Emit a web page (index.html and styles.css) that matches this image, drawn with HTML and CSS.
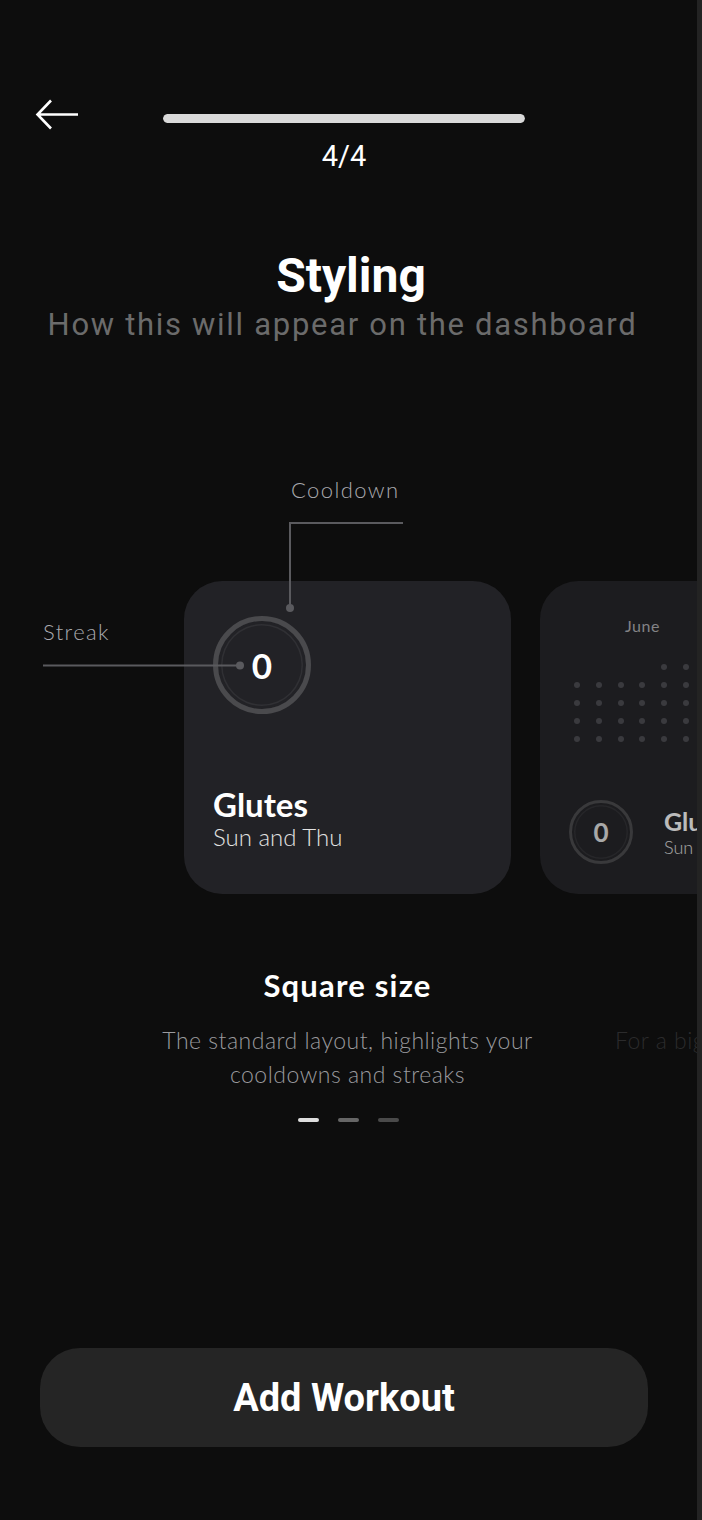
FILE: index.html
```html
<!DOCTYPE html>
<html lang="en">
<head>
    <meta charset="UTF-8">
    <meta name="viewport" content="width=device-width, initial-scale=1.0">
    <title>Add Workout - Styling</title>
    <link rel="stylesheet" href="styles.css">
</head>
<body>
    <div class="screen">
        <header class="topbar">
            <button class="back" aria-label="Back">
                <svg viewBox="0 0 44 32" width="44" height="32">
                    <path d="M16 1.5 L2.5 15.5 L16 29.5 M2.5 15.5 H43" fill="none" stroke="#fff" stroke-width="2.6"/>
                </svg>
            </button>
            <div class="progress">
                <div class="progress-bar"><div class="progress-fill" style="width: 100%"></div></div>
                <div class="progress-label">4/4</div>
            </div>
        </header>

        <div class="heading">
            <h1 class="heading-title">Styling</h1>
            <p class="heading-sub">How this will appear on the dashboard</p>
        </div>

        <div class="carousel">
            <div class="track">
                <!-- square layout -->
                <div class="slide">
                    <div class="card">
                        <svg class="callouts" viewBox="0 0 362 150" width="362" height="150">
                            <path d="M360 3 H247 V88" fill="none" stroke="#5a5a5e" stroke-width="2"/>
                            <circle cx="247" cy="88" r="4" fill="#5a5a5e"/>
                            <path d="M0 145.5 H197" fill="none" stroke="#5a5a5e" stroke-width="2"/>
                            <circle cx="197" cy="145.5" r="4" fill="#5a5a5e"/>
                        </svg>
                        <span class="callout-label callout-cooldown">Cooldown</span>
                        <span class="callout-label callout-streak">Streak</span>

                        <div class="ring">0</div>
                        <div class="card-name">Glutes</div>
                        <div class="card-days">Sun and Thu</div>
                    </div>
                    <h2 class="slide-title">Square size</h2>
                    <p class="slide-desc">The standard layout, highlights your cooldowns and streaks</p>
                </div>

                <!-- wide layout -->
                <div class="slide is-next">
                    <div class="card card-wide">
                        <div class="cal">
                            <div class="cal-month">June</div>
                            <div class="cal-grid">
                                <span class="cal-dot blank"></span><span class="cal-dot blank"></span><span class="cal-dot blank"></span><span class="cal-dot blank"></span><span class="cal-dot"></span><span class="cal-dot"></span><span class="cal-dot"></span>
                                <span class="cal-dot"></span><span class="cal-dot"></span><span class="cal-dot"></span><span class="cal-dot"></span><span class="cal-dot"></span><span class="cal-dot"></span><span class="cal-dot"></span>
                                <span class="cal-dot"></span><span class="cal-dot"></span><span class="cal-dot"></span><span class="cal-dot"></span><span class="cal-dot"></span><span class="cal-dot"></span><span class="cal-dot"></span>
                                <span class="cal-dot"></span><span class="cal-dot"></span><span class="cal-dot"></span><span class="cal-dot"></span><span class="cal-dot"></span><span class="cal-dot"></span><span class="cal-dot"></span>
                                <span class="cal-dot"></span><span class="cal-dot"></span><span class="cal-dot"></span><span class="cal-dot"></span><span class="cal-dot"></span><span class="cal-dot"></span>
                            </div>
                        </div>
                        <div class="card-row">
                            <div class="ring ring-small">0</div>
                            <div>
                                <div class="card-name card-name-small">Glutes</div>
                                <div class="card-days card-days-small">Sun and Thu</div>
                            </div>
                        </div>
                    </div>
                    <h2 class="slide-title">Wide size</h2>
                    <p class="slide-desc">For a bigger view</p>
                </div>
            </div>
        </div>

        <div class="pager">
            <span class="on"></span>
            <span class="mid"></span>
            <span></span>
        </div>

        <button class="cta">Add Workout</button>
    </div>
</body>
</html>
```

FILE: styles.css
```css
* {
    box-sizing: border-box;
}

body {
    margin: 0;
    background: #0d0d0d;
}

.screen {
    width: 702px;
    height: 1520px;
    border-right: 5px solid #232323;
    display: flex;
    flex-direction: column;
    overflow: hidden;
    font-family: Roboto, "Noto Sans", sans-serif;
    color: #fff;
}

/* top bar */
.topbar {
    display: flex;
    align-items: flex-start;
    padding: 99px 0 0 35px;
}

.back {
    width: 44px;
    height: 32px;
    padding: 0;
    border: 0;
    background: none;
}

.back svg {
    display: block;
}

.progress {
    width: 362px;
    margin-left: 84px;
}

.progress-bar {
    margin-top: 15px;
    height: 9px;
    border-radius: 5px;
    background: #2a2a2a;
    overflow: hidden;
}

.progress-fill {
    height: 100%;
    border-radius: 5px;
    background: #d9d9d9;
}

.progress-label {
    margin-top: 16px;
    font-size: 29px;
    line-height: 34px;
    text-align: center;
}

/* heading */
.heading {
    margin-top: 75px;
    text-align: center;
}

.heading-title {
    margin: 0;
    padding-left: 5px;
    font-size: 48px;
    line-height: 56px;
    font-weight: 700;
}

.heading-sub {
    margin: 4px 0 0;
    padding-right: 12px;
    font-size: 31px;
    line-height: 34px;
    letter-spacing: 1.7px;
    color: #6b6b6b;
    white-space: nowrap;
}

/* carousel */
.carousel {
    margin-top: 129px;
    padding-top: 110px;
    overflow: hidden;
}

.track {
    display: flex;
    gap: 29px;
    padding-left: 184px;
}

.slide {
    flex: none;
    width: 327px;
    display: flex;
    flex-direction: column;
    align-items: center;
}

.card {
    position: relative;
    width: 100%;
    height: 313px;
    padding: 35px 29px 0;
    border-radius: 38px;
    background: #222226;
    display: flex;
    flex-direction: column;
    align-items: flex-start;
    font-family: Lato, "Noto Sans", sans-serif;
}

.callouts {
    position: absolute;
    left: -141px;
    top: -61px;
    pointer-events: none;
}

.callout-label {
    position: absolute;
    font-size: 22px;
    line-height: 26px;
    font-weight: 300;
    letter-spacing: 1.4px;
    color: #a9a9ad;
    white-space: nowrap;
}

.callout-cooldown {
    left: 107px;
    top: -104px;
}

.callout-streak {
    left: -141px;
    top: 38px;
}

.ring {
    width: 98px;
    height: 98px;
    border: 5px solid #4a4a4d;
    border-radius: 50%;
    box-shadow: inset 0 0 0 3px #222226, inset 0 0 0 4.5px #303034;
    display: flex;
    align-items: center;
    justify-content: center;
    font-size: 35px;
    line-height: 1;
    font-weight: 700;
}

.card-name {
    margin-top: 71px;
    font-size: 33px;
    line-height: 38px;
    font-weight: 700;
}

.card-days {
    font-size: 24px;
    line-height: 28px;
    font-weight: 300;
    color: #e2e2e2;
}

/* wide card (next slide) */
.is-next .card {
    opacity: 0.72;
}

.card-wide {
    padding-bottom: 30px;
}

.cal {
    margin-left: 5px;
    width: 137px;
}

.cal-month {
    font-size: 16px;
    line-height: 20px;
    letter-spacing: 0.5px;
    text-align: center;
    color: #b0b0b4;
}

.cal-grid {
    margin-top: 28px;
    display: grid;
    grid-template-columns: repeat(7, 6px);
    column-gap: 15.8px;
    row-gap: 12px;
}

.cal-dot {
    width: 6px;
    height: 6px;
    border-radius: 50%;
    background: #4c4c52;
}

.cal-dot.blank {
    background: transparent;
}

.card-row {
    margin-top: auto;
    display: flex;
    align-items: center;
    gap: 31px;
}

.ring-small {
    width: 64px;
    height: 64px;
    border-width: 3px;
    box-shadow: inset 0 0 0 2px #222226, inset 0 0 0 3.5px #303034;
    font-size: 26px;
    color: #e4e4e4;
}

.card-name-small {
    margin-top: 0;
    font-size: 25px;
    line-height: 29px;
}

.card-days-small {
    font-size: 18px;
    line-height: 22px;
}

.slide-title {
    margin: 72px 0 0;
    font-family: Lato, "Noto Sans", sans-serif;
    font-size: 31px;
    line-height: 38px;
    font-weight: 700;
    letter-spacing: 1.2px;
}

.slide-desc {
    flex: none;
    width: 400px;
    margin: 19px 0 0;
    font-family: Lato, "Noto Sans", sans-serif;
    font-size: 23px;
    line-height: 34px;
    font-weight: 300;
    letter-spacing: 0.5px;
    text-align: center;
    color: #9a9a9e;
}

.is-next .slide-title {
    opacity: 0;
}

.is-next .slide-desc {
    color: #2b2b2c;
}

/* pager */
.pager {
    display: flex;
    justify-content: center;
    gap: 19px;
    margin-top: 26.5px;
}

.pager span {
    width: 21px;
    height: 4px;
    border-radius: 2px;
    background: #4a4a4a;
}

.pager .on {
    background: #dddddd;
}

.pager .mid {
    background: #666666;
}

/* bottom button */
.cta {
    margin: auto 0 73px 40px;
    width: 608px;
    height: 99px;
    border: 0;
    border-radius: 40px;
    background: #252525;
    color: #fff;
    font-family: Roboto, "Noto Sans", sans-serif;
    font-size: 38px;
    font-weight: 700;
}
```
